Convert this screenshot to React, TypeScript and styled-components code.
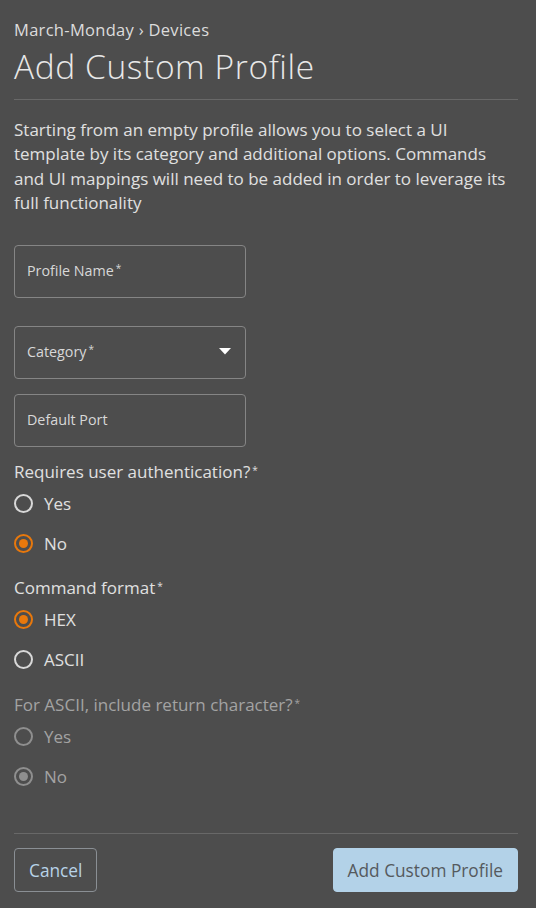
import React from "react";
import styled, { createGlobalStyle } from "styled-components";

const Global = createGlobalStyle`
  html, body { margin: 0; padding: 0; background: #4d4d4d; }
  body { font-family: "Open Sans", "Liberation Sans", sans-serif; color: #e0e0e0; }
  * { box-sizing: border-box; }
`;

const Page = styled.div`
  width: 536px;
  min-height: 908px;
  background: #4d4d4d;
  padding: 20px 18px 16px 14px;
  display: flex;
  flex-direction: column;
`;

const Breadcrumb = styled.div`
  font-size: 16.5px;
  line-height: 20px;
  letter-spacing: 0.3px;
  color: #dcdcdc;
`;

const Title = styled.h1`
  margin: 6px 0 0;
  font-size: 33.5px;
  line-height: 40px;
  font-weight: 300;
  letter-spacing: 0.6px;
  color: #e8e8e8;
`;

const Divider = styled.hr<{ $top: number }>`
  border: none;
  border-top: 1px solid #686868;
  margin: ${(p) => p.$top}px 0 0;
  width: 100%;
`;

const Intro = styled.p`
  margin: 18px 0 0;
  font-size: 17px;
  line-height: 24.3px;
  color: #e0e0e0;
`;

const Field = styled.div<{ $top: number }>`
  position: relative;
  margin-top: ${(p) => p.$top}px;
  width: 232px;
  height: 53px;
  border: 1px solid #858585;
  border-radius: 4px;
  display: flex;
  align-items: center;
  justify-content: space-between;
  padding: 0 12px 2px 12px;
`;

const FieldLabel = styled.span`
  font-size: 14.3px;
  color: #d8d8d8;
`;

const Req = styled.sup`
  font-size: 10px;
  margin-left: 2px;
  vertical-align: 4px;
  line-height: 0;
`;

const Caret = styled.svg`
  width: 12px;
  height: 7px;
  margin-right: 2px;
`;

const GroupLabel = styled.div<{ $top: number; $disabled?: boolean }>`
  margin-top: ${(p) => p.$top}px;
  font-size: 17px;
  line-height: 22px;
  margin-bottom: 1px;
  color: ${(p) => (p.$disabled ? "#a3a3a3" : "#e0e0e0")};
`;

const RadioRow = styled.label<{ $disabled?: boolean }>`
  display: flex;
  align-items: center;
  gap: 11px;
  height: 39.5px;
  font-size: 17px;
  color: ${(p) => (p.$disabled ? "#a3a3a3" : "#e0e0e0")};
`;

const RadioCircle = styled.span<{ $checked?: boolean; $disabled?: boolean }>`
  width: 19px;
  height: 19px;
  border-radius: 50%;
  border: 2px solid
    ${(p) => (p.$disabled ? "#8f8f8f" : p.$checked ? "#e8780c" : "#d8d8d8")};
  display: flex;
  align-items: center;
  justify-content: center;
  flex: none;
  &::after {
    content: "";
    display: ${(p) => (p.$checked ? "block" : "none")};
    width: 9px;
    height: 9px;
    border-radius: 50%;
    background: ${(p) => (p.$disabled ? "#8f8f8f" : "#e8780c")};
  }
`;

const RadioGroup = styled.div`
  display: flex;
  flex-direction: column;
`;

const Spacer = styled.div`
  flex: 1;
`;

const Footer = styled.div`
  display: flex;
  justify-content: space-between;
  margin-top: 14px;
`;

const Button = styled.button<{ $primary?: boolean }>`
  height: 44px;
  padding: 0 14px;
  font-family: inherit;
  font-size: 17.3px;
  border-radius: 4px;
  border: 1px solid ${(p) => (p.$primary ? "#b3d2e8" : "#8a8f94")};
  background: ${(p) => (p.$primary ? "#b3d2e8" : "transparent")};
  color: ${(p) => (p.$primary ? "#555a5e" : "#b8d3e8")};
`;

type Opt = { label: string; checked?: boolean };

function Radios({ options, disabled }: { options: Opt[]; disabled?: boolean }) {
  return (
    <RadioGroup>
      {options.map((o) => (
        <RadioRow key={o.label} $disabled={disabled}>
          <RadioCircle $checked={o.checked} $disabled={disabled} />
          {o.label}
        </RadioRow>
      ))}
    </RadioGroup>
  );
}

export default function App() {
  return (
    <>
      <Global />
      <Page>
        <Breadcrumb>March-Monday › Devices</Breadcrumb>
        <Title>Add Custom Profile</Title>
        <Divider $top={13} />
        <Intro>
          Starting from an empty profile allows you to select a UI template by its category and
          additional options. Commands and UI mappings will need to be added in order to leverage
          its full functionality
        </Intro>
        <Field $top={30}>
          <FieldLabel>
            Profile Name<Req>*</Req>
          </FieldLabel>
        </Field>
        <Field $top={28}>
          <FieldLabel>
            Category<Req>*</Req>
          </FieldLabel>
          <Caret viewBox="0 0 12 7">
            <path d="M0 0 H12 L6 6.5 Z" fill="#ffffff" />
          </Caret>
        </Field>
        <Field $top={15}>
          <FieldLabel>Default Port</FieldLabel>
        </Field>
        <GroupLabel $top={14}>
          Requires user authentication?<Req>*</Req>
        </GroupLabel>
        <Radios options={[{ label: "Yes" }, { label: "No", checked: true }]} />
        <GroupLabel $top={14}>
          Command format<Req>*</Req>
        </GroupLabel>
        <Radios options={[{ label: "HEX", checked: true }, { label: "ASCII" }]} />
        <GroupLabel $top={15} $disabled>
          For ASCII, include return character?<Req>*</Req>
        </GroupLabel>
        <Radios disabled options={[{ label: "Yes" }, { label: "No", checked: true }]} />
        <Spacer />
        <Divider $top={0} />
        <Footer>
          <Button>Cancel</Button>
          <Button $primary>Add Custom Profile</Button>
        </Footer>
      </Page>
    </>
  );
}
